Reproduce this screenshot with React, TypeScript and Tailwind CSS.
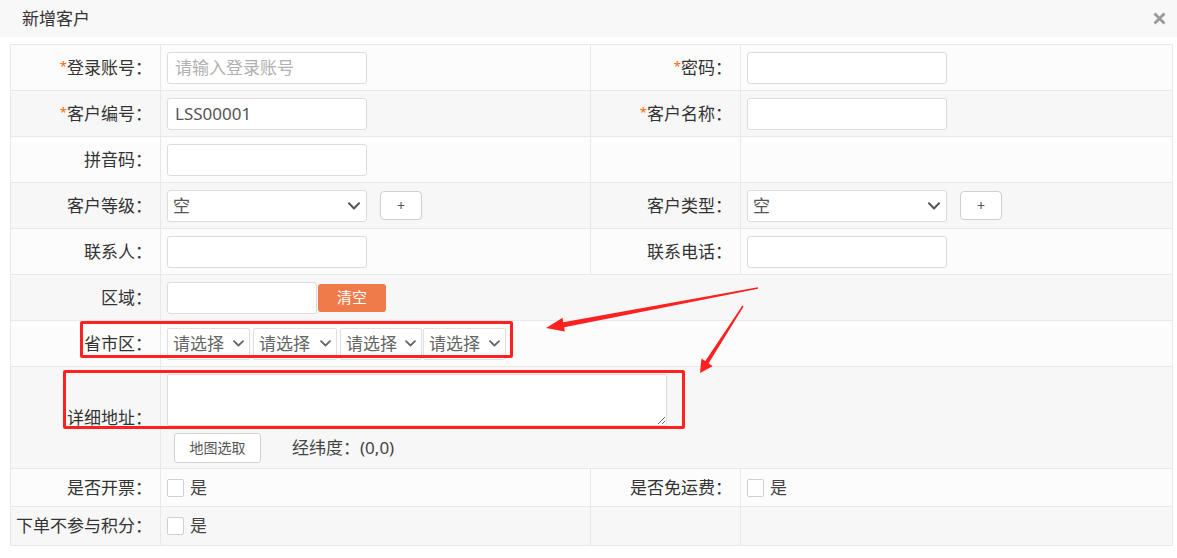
import React from "react";

const cellB = "border border-[#e8e8e8]";

function Label({ children, req }: { children?: React.ReactNode; req?: boolean }) {
  return (
    <td className={`${cellB} pr-[8px] text-right align-middle text-[17px] text-[#333] whitespace-nowrap`}>
      {req && <span className="relative top-[-3px] text-[13px] text-[#f60]">*</span>}
      {children}
      {children ? "：" : null}
    </td>
  );
}

function Input({ value, placeholder, w = "w-[200px]" }: { value?: string; placeholder?: string; w?: string }) {
  return (
    <input
      readOnly
      value={value ?? ""}
      placeholder={placeholder}
      className={`${w} h-[32px] rounded-[3px] border border-[#dcdcdc] bg-white px-[7px] text-[17px] text-[#555] placeholder:text-[#b0b0b0] outline-none`}
    />
  );
}

function Chevron({ w = 12, h = 8, sw = 2, color = "#555" }: { w?: number; h?: number; sw?: number; color?: string }) {
  return (
    <svg width={w} height={h} viewBox={`0 0 ${w} ${h}`} fill="none">
      <path d={`M1 1.2 L${w / 2} ${h - 1.5} L${w - 1} 1.2`} stroke={color} strokeWidth={sw} strokeLinecap="round" strokeLinejoin="round" />
    </svg>
  );
}

function Select({ text }: { text: string }) {
  return (
    <div className="flex h-[32px] w-[200px] items-center justify-between rounded-[3px] border border-[#dcdcdc] bg-white pl-[5px] pr-[6px] text-[17px] text-[#555]">
      <span>{text}</span>
      <Chevron />
    </div>
  );
}

function PlusBtn() {
  return (
    <div className="ml-[13px] flex h-[29px] w-[42px] items-center justify-center rounded-[4px] border border-[#cfcfcf] bg-white text-[14px] text-[#555]">
      +
    </div>
  );
}

function SmallSelect({ w }: { w: string }) {
  return (
    <div className={`${w} flex h-[32px] items-center justify-between rounded-[2px] border border-[#e0e0e0] bg-white pl-[5px] pr-[5px] text-[17px] text-[#666]`}>
      <span>请选择</span>
      <Chevron w={11} h={7} sw={1.8} color="#666" />
    </div>
  );
}

function Check() {
  return (
    <div className="flex items-center">
      <span className="inline-block h-[18px] w-[17px] rounded-[2px] border border-[#d0d0d0] bg-white" />
      <span className="ml-[6px] text-[17px] text-[#444]">是</span>
    </div>
  );
}

const inCell = `${cellB} pl-[6px] align-middle`;

export default function App() {
  const odd = "bg-[#fcfcfc]";
  const even = "bg-[#f7f7f7]";
  return (
    <div className="relative h-[558px] w-[1177px] overflow-hidden bg-white font-['Noto_Sans','Noto_Sans_CJK_SC',sans-serif] text-[#333]">
      {/* header */}
      <div className="flex h-[37px] items-center justify-between bg-[#f8f8f8] pl-[22px] pr-[10px]">
        <span className="text-[17px] text-[#333]">新增客户</span>
        <svg width="13" height="13" viewBox="0 0 13 13" className="mr-[1px]">
          <path d="M1.5 1.5 L11.5 11.5 M11.5 1.5 L1.5 11.5" stroke="#999" strokeWidth="2.8" strokeLinecap="butt" />
        </svg>
      </div>

      <div className="pl-[10px] pt-[7px]">
        <table className="w-[1162px] table-fixed border-collapse">
          <colgroup>
            <col className="w-[150px]" />
            <col className="w-[430px]" />
            <col className="w-[150px]" />
            <col className="w-[432px]" />
          </colgroup>
          <tbody>
            <tr className={`${odd} h-[46px]`}>
              <Label req>登录账号</Label>
              <td className={inCell}><Input placeholder="请输入登录账号" /></td>
              <Label req>密码</Label>
              <td className={inCell}><Input /></td>
            </tr>
            <tr className={`${even} h-[46px]`}>
              <Label req>客户编号</Label>
              <td className={inCell}><Input value="LSS00001" /></td>
              <Label req>客户名称</Label>
              <td className={inCell}><Input /></td>
            </tr>
            <tr className={`${odd} h-[46px]`}>
              <Label>拼音码</Label>
              <td className={inCell}><Input /></td>
              <td className={cellB}></td>
              <td className={cellB}></td>
            </tr>
            <tr className={`${even} h-[46px]`}>
              <Label>客户等级</Label>
              <td className={inCell}>
                <div className="flex items-center"><Select text="空" /><PlusBtn /></div>
              </td>
              <Label>客户类型</Label>
              <td className={inCell}>
                <div className="flex items-center"><Select text="空" /><PlusBtn /></div>
              </td>
            </tr>
            <tr className={`${odd} h-[46px]`}>
              <Label>联系人</Label>
              <td className={inCell}><Input /></td>
              <Label>联系电话</Label>
              <td className={inCell}><Input /></td>
            </tr>
            <tr className={`${even} h-[46px]`}>
              <Label>区域</Label>
              <td className={inCell} colSpan={3}>
                <div className="flex items-center">
                  <Input w="w-[150px]" />
                  <div className="ml-[1px] flex h-[28px] w-[68px] items-center justify-center rounded-[3px] bg-[#f07b4a] text-[15px] text-white">清空</div>
                </div>
              </td>
            </tr>
            <tr className={`${odd} h-[46px]`}>
              <Label>省市区</Label>
              <td className={inCell} colSpan={3}>
                <div className="flex items-center">
                  <SmallSelect w="w-[83px]" />
                  <div className="ml-[3px]"><SmallSelect w="w-[84px]" /></div>
                  <div className="ml-[3px]"><SmallSelect w="w-[82px]" /></div>
                  <div className="ml-[1px]"><SmallSelect w="w-[83px]" /></div>
                </div>
              </td>
            </tr>
            <tr className={`${even} h-[102px]`}>
              <Label>详细地址</Label>
              <td className={`${inCell} pt-[1px]`} colSpan={3}>
                <textarea readOnly className="block h-[52px] w-[500px] rounded-[2px] border border-[#dcdcdc] bg-white outline-none" />
                <div className="mt-[7px] flex items-center pl-[7px]">
                  <div className="flex h-[30px] w-[87px] items-center justify-center rounded-[3px] border border-[#cfcfcf] bg-white text-[14px] text-[#555]">地图选取</div>
                  <span className="ml-[31px] text-[17px] text-[#444]">经纬度：(0,0)</span>
                </div>
              </td>
            </tr>
            <tr className={`${odd} h-[38px]`}>
              <Label>是否开票</Label>
              <td className={inCell}><Check /></td>
              <Label>是否免运费</Label>
              <td className={inCell}><Check /></td>
            </tr>
            <tr className={`${even} h-[39px]`}>
              <Label>下单不参与积分</Label>
              <td className={inCell}><Check /></td>
              <td className={cellB}></td>
              <td className={cellB}></td>
            </tr>
          </tbody>
        </table>
      </div>

      {/* annotations */}
      <div className="pointer-events-none absolute left-[80px] top-[321px] h-[37px] w-[433px] rounded-[2px] border-[3px] border-[#ff2020]" />
      <div className="pointer-events-none absolute left-[63px] top-[370px] h-[59px] w-[622px] rounded-[2px] border-[3px] border-[#ff2020]" />
      <svg className="pointer-events-none absolute left-0 top-0" width="1177" height="558">
        <polygon
          fill="#ff2020"
          points="758.1,288.7 564.2,327.2 564.8,331.6 546,328 562.6,317.8 563.2,322.2 757.9,287.3"
        />
        <polygon
          fill="#ff2020"
          points="743.6,306.4 708.7,363.2 712.6,366.3 700,373 701.4,358.4 705.3,361 742.4,305.6"
        />
      </svg>
    </div>
  );
}
